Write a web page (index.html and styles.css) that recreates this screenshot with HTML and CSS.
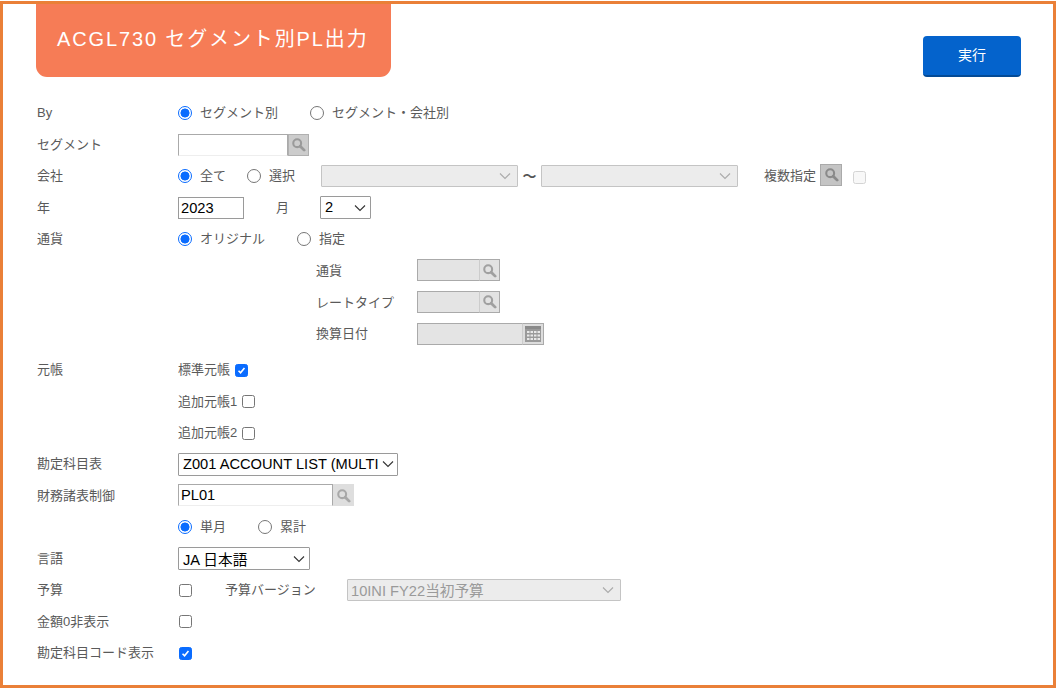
FILE: index.html
```html
<!DOCTYPE html>
<html lang="ja">
<head>
<meta charset="utf-8">
<title>ACGL730 セグメント別PL出力</title>
<link rel="stylesheet" href="styles.css">
</head>
<body>
<svg class="defs" width="0" height="0" aria-hidden="true">
  <symbol id="lens" viewBox="0 0 16 16">
    <circle cx="6.600" cy="6.600" r="4.200" fill="none" stroke="currentColor" stroke-width="2.200"/>
    <path d="M9.800 9.800 14 14" stroke="currentColor" stroke-width="3" stroke-linecap="round"/>
  </symbol>
  <symbol id="chev" viewBox="0 0 12 8">
    <path d="M1 1.500 6 6.500 11 1.500" fill="none" stroke="currentColor" stroke-width="1.100"/>
  </symbol>
  <symbol id="cal" viewBox="0 0 18 18">
    <path d="M1 1h16v16H1z" fill="#9a9a9a"/>
    <path d="M1 1h16v3H1z" fill="#8a8a8a"/>
    <path d="M3 6h2.500v2H3zM6.500 6h2.500v2H6.500zM10 6h2.500v2H10zM13.500 6H16v2h-2.500zM3 9.500h2.500v2H3zM6.500 9.500h2.500v2H6.500zM10 9.500h2.500v2H10zM13.500 9.500H16v2h-2.500zM3 13h2.500v2H3zM6.500 13h2.500v2H6.500zM10 13h2.500v2H10zM13.500 13H16v2h-2.500z" fill="#e8e8e8"/>
  </symbol>
</svg>
<main class="frame">
  <header class="head">
    <h1 class="title">ACGL730 セグメント別PL出力</h1>
    <button class="run" type="button">実行</button>
  </header>
  <form class="form">
    <div class="row">
      <span class="label">By</span>
      <div class="opts">
        <label class="opt"><input type="radio" name="by" checked>セグメント別</label>
        <label class="opt"><input type="radio" name="by">セグメント・会社別</label>
      </div>
    </div>
    <div class="row">
      <span class="label">セグメント</span>
      <div class="lookup w131">
        <input class="text" type="text">
        <span class="btn"><svg class="ico"><use href="#lens"/></svg></span>
      </div>
    </div>
    <div class="row">
      <span class="label">会社</span>
      <div class="opts tight">
        <label class="opt"><input type="radio" name="co" checked>全て</label>
        <label class="opt"><input type="radio" name="co">選択</label>
      </div>
      <div class="sel off w197 ml26"><svg class="chev"><use href="#chev"/></svg></div>
      <span class="tilde">〜</span>
      <div class="sel off w197"><svg class="chev"><use href="#chev"/></svg></div>
      <span class="multi">複数指定</span>
      <span class="btn solo"><svg class="ico"><use href="#lens"/></svg></span>
      <input class="check ml11" type="checkbox" disabled>
    </div>
    <div class="row">
      <span class="label">年</span>
      <input class="year" type="text" value="2023">
      <span class="month">月</span>
      <div class="sel w51"><span>2</span><svg class="chev"><use href="#chev"/></svg></div>
    </div>
    <div class="row">
      <span class="label">通貨</span>
      <div class="opts">
        <label class="opt"><input type="radio" name="cur" checked>オリジナル</label>
        <label class="opt"><input type="radio" name="cur">指定</label>
      </div>
    </div>
    <div class="row">
      <span class="sublabel">通貨</span>
      <div class="lookup w83 dis">
        <input class="text" type="text" disabled>
        <span class="btn"><svg class="ico"><use href="#lens"/></svg></span>
      </div>
    </div>
    <div class="row">
      <span class="sublabel">レートタイプ</span>
      <div class="lookup w83 dis">
        <input class="text" type="text" disabled>
        <span class="btn"><svg class="ico"><use href="#lens"/></svg></span>
      </div>
    </div>
    <div class="row">
      <span class="sublabel">換算日付</span>
      <div class="lookup w127 dis">
        <input class="text" type="text" disabled>
        <span class="btn"><svg class="cal"><use href="#cal"/></svg></span>
      </div>
    </div>
    <div class="row gap-top">
      <span class="label">元帳</span>
      <label class="ledger">標準元帳<input class="check" type="checkbox" checked></label>
    </div>
    <div class="row">
      <span class="label"></span>
      <label class="ledger">追加元帳1<input class="check" type="checkbox"></label>
    </div>
    <div class="row">
      <span class="label"></span>
      <label class="ledger">追加元帳2<input class="check" type="checkbox"></label>
    </div>
    <div class="row">
      <span class="label">勘定科目表</span>
      <div class="sel w220"><span>Z001 ACCOUNT LIST (MULTI</span><svg class="chev"><use href="#chev"/></svg></div>
    </div>
    <div class="row">
      <span class="label">財務諸表制御</span>
      <div class="lookup w176">
        <input class="text" type="text" value="PL01">
        <span class="btn light"><svg class="ico"><use href="#lens"/></svg></span>
      </div>
    </div>
    <div class="row">
      <span class="label"></span>
      <div class="opts">
        <label class="opt"><input type="radio" name="per" checked>単月</label>
        <label class="opt"><input type="radio" name="per">累計</label>
      </div>
    </div>
    <div class="row">
      <span class="label">言語</span>
      <div class="sel w132"><span>JA 日本語</span><svg class="chev"><use href="#chev"/></svg></div>
    </div>
    <div class="row">
      <span class="label">予算</span>
      <input class="check ml1" type="checkbox">
      <span class="budget">予算バージョン</span>
      <div class="sel off w274"><span>10INI FY22当初予算</span><svg class="chev"><use href="#chev"/></svg></div>
    </div>
    <div class="row">
      <span class="label">金額0非表示</span>
      <input class="check ml1" type="checkbox">
    </div>
    <div class="row">
      <span class="label">勘定科目コード表示</span>
      <input class="check ml1" type="checkbox" checked>
    </div>
  </form>
</main>
</body>
</html>
```
FILE: styles.css
```css
* { box-sizing: border-box; }
html, body { margin: 0; padding: 0; background: #fff; }
body {
  font-family: "Liberation Sans", "Noto Sans CJK JP", sans-serif;
  font-size: 13px;
  color: #5a5a5a;
  overflow: hidden;
}
.defs { position: absolute; }
.frame {
  margin-top: 1px;
  height: 687px;
  border: 3px solid #ea8038;
  overflow: hidden;
}
.head {
  display: flex;
  justify-content: space-between;
  align-items: flex-start;
  padding: 0 32px 0 33px;
}
.title {
  margin: 0;
  width: 355px;
  height: 73px;
  padding: 21.5px 0 0 21px;
  background: #f67c56;
  border-radius: 0 0 11px 11px;
  color: #fff;
  font-size: 20px;
  line-height: 26px;
  font-weight: 400;
  letter-spacing: 1.87px;
  white-space: nowrap;
}
.run {
  margin-top: 32px;
  width: 98px;
  height: 41px;
  padding: 0 0 3px;
  border: 0;
  border-bottom: 2px solid #034a96;
  border-radius: 4px;
  background: #0463cc;
  color: #fff;
  font: inherit;
  font-size: 14px;
}
.form { padding: 20.5px 0 0 34px; }
.row {
  display: flex;
  align-items: center;
  height: 31.5px;
  line-height: 16px;
  white-space: nowrap;
}
.gap-top { margin-top: 4.5px; }
.label { width: 141px; flex: none; }
.sublabel { width: 101px; margin-left: 279px; flex: none; padding-top: 1px; }
.opts { display: flex; gap: 32px; }
.opts.tight { gap: 21px; }
.opt { display: flex; align-items: center; gap: 8px; }
.opt input {
  appearance: none;
  margin: 0;
  width: 14px;
  height: 14px;
  border: 1px solid #767676;
  border-radius: 50%;
  background: #fff;
}
.opt input:checked {
  border: 1.5px solid #0a6cff;
  background: radial-gradient(circle, #0a6cff 0 4.2px, #fff 4.8px);
}
.check {
  appearance: none;
  margin: 0;
  width: 13px;
  height: 13px;
  border: 1px solid #767676;
  border-radius: 2.5px;
  background: #fff;
  flex: none;
}
.check:checked {
  border-color: #0a6cff;
  background: #0a6cff url("data:image/svg+xml,%3Csvg xmlns='http://www.w3.org/2000/svg' viewBox='0 0 13 13'%3E%3Cpath d='M3 6.800 5.400 9.300 10 3.500' fill='none' stroke='%23fff' stroke-width='1.900'/%3E%3C/svg%3E") center/contain no-repeat;
}
.check:disabled { border-color: #d4d4d4; background: #f8f8f8; }
.ml1 { margin-left: 1px; }
.ml11 { margin-left: 11px; margin-top: 3px; }
.ml26 { margin-left: 26px; }
.lookup { display: flex; height: 22px; }
.w131 { width: 131px; }
.w83 { width: 83px; margin-top: -1px; }
.w127 { width: 127px; }
.w176 { width: 176px; margin-top: -1px; }
.text {
  flex: 1;
  min-width: 0;
  margin: 0;
  padding: 0 3px 1px 2px;
  border: 0;
  border-top: 1px solid #aaa;
  border-left: 1px solid #aaa;
  border-right: 1px solid #aaa;
  border-bottom: 1px solid #eee;
  background: #fff;
  color: #000;
  font: 14.67px "Liberation Sans", sans-serif;
  outline: none;
}
.dis .text { background: #e4e4e4; border-bottom-color: #aaa; border-right: 0; }
.btn {
  width: 21px;
  height: 22px;
  flex: none;
  display: flex;
  align-items: center;
  justify-content: center;
  background: #ccc;
  border: 1px solid #b0b0b0;
  color: #9a9a9a;
}
.w127 .btn { width: 22px; }
.btn.light { background: #dedede; border-color: #dedede; color: #a8a8a8; }
.dis .btn { background: #e2e2e2; border: 1px solid #aaa; border-left: 1px solid #ccc; color: #a0a0a0; }
.w127.dis .btn { background: #ddd; }
.btn.solo { width: 22px; margin: -3px 0 0 4px; background: #c4c4c4; border-color: #aaa; color: #8a8a8a; }
.ico { width: 15px; height: 15px; }
.cal { width: 18px; height: 18px; }
.sel {
  height: 23px;
  display: flex;
  align-items: center;
  justify-content: space-between;
  padding: 0 4px;
  border: 1px solid #9a9a9a;
  border-radius: 1px;
  background: #fff;
  color: #000;
  font: 14.67px "Liberation Sans", "Noto Sans CJK JP", sans-serif;
  flex: none;
}
.sel span { margin-top: -1px; }
.sel .chev { width: 12px; height: 8px; margin-left: auto; color: #333; }
.sel.off { height: 22px; background: #ececec; border-color: #c4c4c4; color: #9a9a9a; padding-left: 3px; }
.sel.off .chev { color: #aaa; margin-right: 2px; }
.w51 { width: 51px; }
.w132 { width: 132px; }
.w197 { width: 197px; }
.w220 { width: 220px; padding-right: 3px; }
.w274 { width: 274px; }
.tilde { width: 23px; text-align: center; color: #555; font-size: 14px; font-weight: 700; }
.multi { margin-left: 26px; margin-top: -1px; }
.year {
  width: 66px;
  height: 22px;
  margin: 0;
  padding: 0 3px 0 2px;
  border: 1px solid #9a9a9a;
  color: #000;
  font: 14.67px "Liberation Sans", sans-serif;
  outline: none;
}
.month { margin-left: 32px; width: 44px; }
.ledger { display: flex; align-items: center; gap: 5px; padding-top: 1px; }
.budget { margin-left: 33px; width: 122px; }
```
